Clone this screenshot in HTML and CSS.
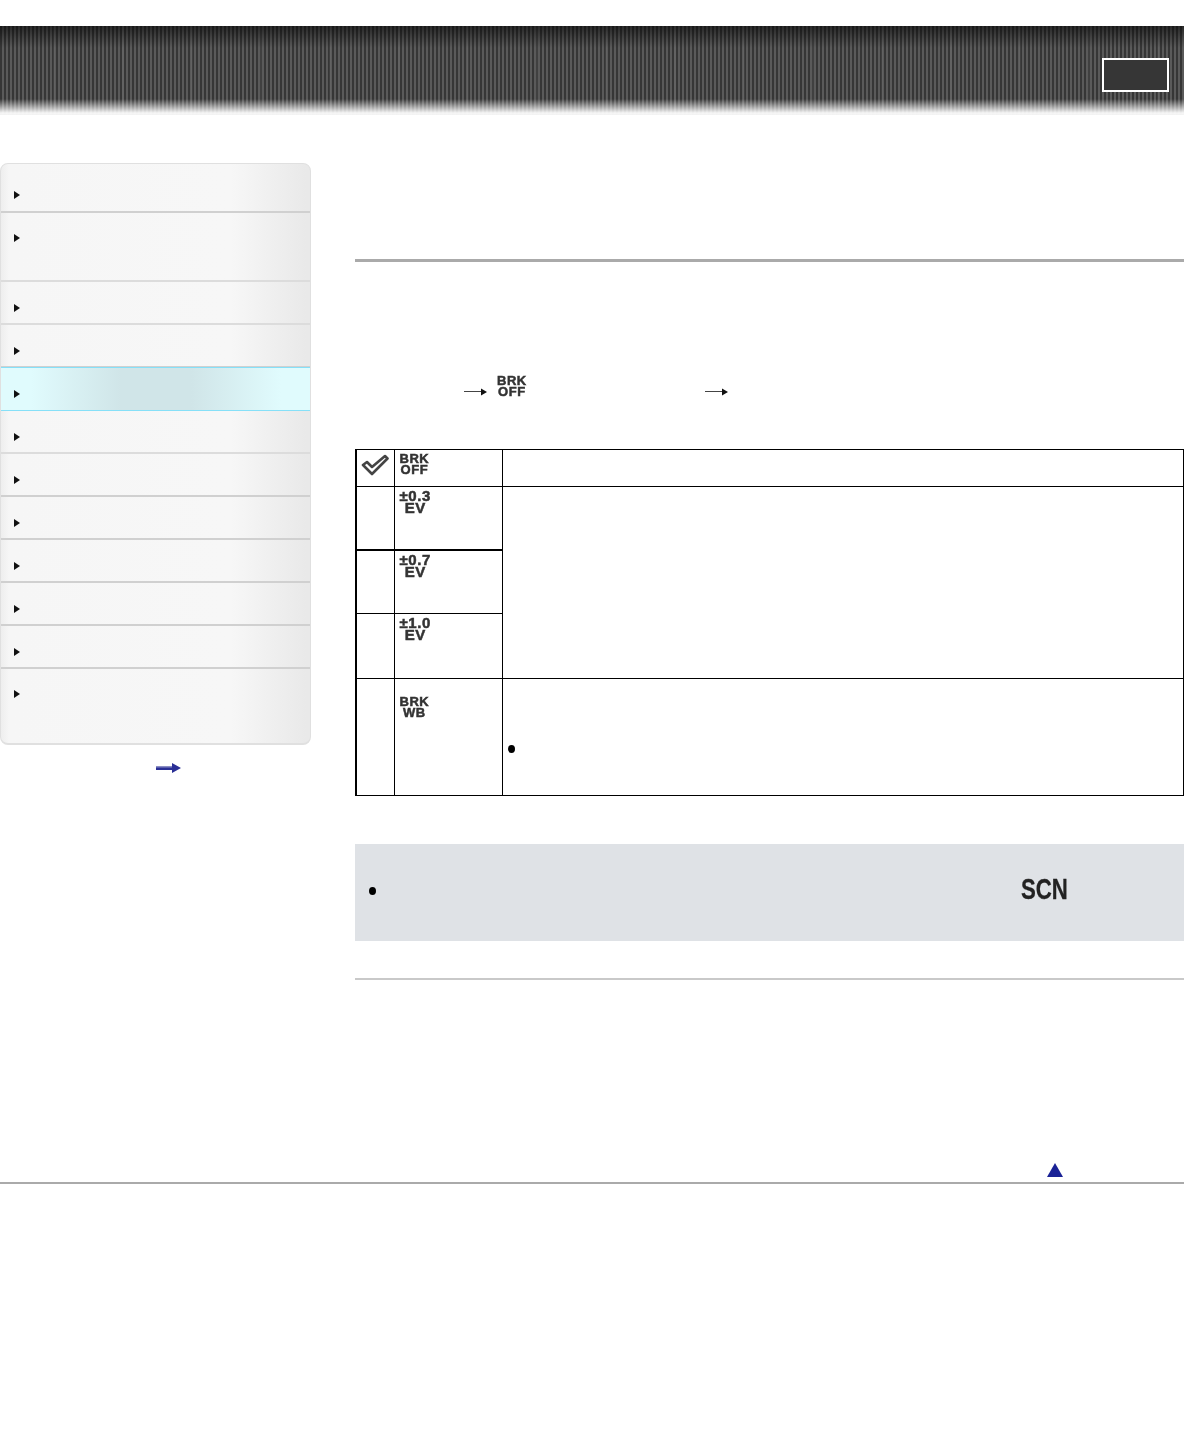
FILE: index.html
```html
<!DOCTYPE html>
<html lang="en">
<head>
  <meta charset="UTF-8" />
  <title>Bracket</title>
  <link rel="stylesheet" href="styles.css">
</head>
<body>
  <div class="header">
    <div class="header-box"></div>
  </div>

  <div class="main">
    <div class="side">
      <ul class="menu">
        <li class="r48"><i class="tri"></i></li>
        <li class="r69 thin"><i class="tri"></i></li>
        <li class="thin"><i class="tri"></i></li>
        <li><i class="tri"></i></li>
        <li class="active"><i class="tri"></i></li>
        <li class="thin"><i class="tri"></i></li>
        <li><i class="tri"></i></li>
        <li><i class="tri"></i></li>
        <li><i class="tri"></i></li>
        <li><i class="tri"></i></li>
        <li><i class="tri"></i></li>
        <li class="last"><i class="tri"></i></li>
      </ul>
      <div class="more">
        <svg width="26" height="12" viewBox="0 0 26 12"><path d="M0 4h16V1l9 5-9 5V8H0z" fill="#2a2f96"/><path d="M0 4h16v1.500H0z" fill="#8b8ec4"/></svg>
      </div>
    </div>

    <div class="content">
      <div class="title-rule"></div>
      <div class="steps">
        <svg class="arr arr1" width="24" height="10" viewBox="0 0 24 10"><path d="M0 4.500h17" stroke="#444" stroke-width="1"/><path d="M17 1.500l6 3.500-6 3.500z" fill="#111"/></svg>
        <span class="ico">BRK OFF</span>
        <svg class="arr arr2" width="24" height="10" viewBox="0 0 24 10"><path d="M0 4.500h17" stroke="#444" stroke-width="1"/><path d="M17 1.500l6 3.500-6 3.500z" fill="#111"/></svg>
      </div>

      <table class="opts">
        <tr class="h37">
          <td class="c1">
            <svg class="check" width="28" height="22" viewBox="0 0 28 22"><path d="M2 11l4-3 5 5L24 2l2.500 2.500L11 20z" fill="#fff" stroke="#444" stroke-width="2.600" stroke-linejoin="round"/></svg>
          </td>
          <td class="c2"><span class="ico">BRK OFF</span></td>
          <td></td>
        </tr>
        <tr class="h63 thick">
          <td class="c1"></td>
          <td class="c2"><span class="ico ev">±0.3 EV</span></td>
          <td rowspan="3"></td>
        </tr>
        <tr class="h64">
          <td class="c1"></td>
          <td class="c2"><span class="ico ev">±0.7 EV</span></td>
        </tr>
        <tr class="h65">
          <td class="c1"></td>
          <td class="c2"><span class="ico ev">±1.0 EV</span></td>
        </tr>
        <tr class="h117">
          <td class="c1"></td>
          <td class="c2 pad-wb"><span class="ico">BRK WB</span></td>
          <td class="pad-wb"><i class="dot"></i></td>
        </tr>
      </table>

      <div class="note">
        <i class="note-dot"></i>
        <span class="scn">SCN</span>
      </div>
      <div class="note-rule"></div>
      <div class="top-link">
        <svg width="16" height="14" viewBox="0 0 16 14"><path d="M8 0l8 14H0z" fill="#1a2296"/></svg>
      </div>
    </div>
  </div>
  <div class="foot-rule"></div>
</body>
</html>
```

FILE: styles.css
```css
* {
  box-sizing: border-box;
}
body {
  margin: 0;
  background: #fff;
  font-family: "Liberation Sans", Arial, sans-serif;
  color: #000;
}
.header {
  height: 89px;
  margin-top: 26px;
  padding: 32px 15px 0 0;
  display: flex;
  justify-content: flex-end;
  align-items: flex-start;
  background:
    linear-gradient(to bottom, rgba(255,255,255,0) 0, rgba(255,255,255,0) 73px, rgba(255,255,255,.95) 87px, #f2f2f2 89px),
    linear-gradient(to bottom, rgba(0,0,0,.55) 0, rgba(0,0,0,0) 22px),
    repeating-linear-gradient(to right, transparent 0, transparent 53px, rgba(255,255,255,.05) 53px, rgba(255,255,255,.05) 55px, transparent 55px, transparent 69px),
    repeating-linear-gradient(to right, #363636 0, #363636 2px, #5a5a5a 2px, #5a5a5a 4px);
}
.header-box {
  width: 67px;
  height: 34px;
  border: 2px solid #fff;
  background: #363636;
}
.main {
  display: flex;
  padding-top: 48px;
}
.side {
  width: 311px;
  margin-right: 44px;
  flex-shrink: 0;
}
.menu {
  list-style: none;
  margin: 0;
  padding: 0;
  border: 1px solid #e0e0e0;
  border-width: 1px 1px 2px 1px;
  border-radius: 8px;
  overflow: hidden;
  background: linear-gradient(to right, #eee 0, #f6f6f6 8px, #f7f7f7 230px, #e9e9e9 305px);
}
.menu li {
  height: 43px;
  border-bottom: 2px solid #d0d0d0;
  padding-top: 22px;
  padding-left: 13px;
}
.menu li.thin {
  border-bottom-color: #dcdcdc;
}
.menu li.r48 {
  height: 49px;
  padding-top: 27px;
}
.menu li.r69 {
  height: 69px;
  padding-top: 21px;
}
.menu li.active {
  margin: -1px 0 0 -1px;
  width: 311px;
  height: 44px;
  border: 1px solid #86e0f8;
  padding-left: 13px;
  background: linear-gradient(to right, #e0fbfd 0, #e0fbfd 30px, #d0e5e8 120px, #d0e5e8 190px, #e0fbfd 280px);
}
.menu li.last {
  height: 74px;
  border-bottom: 0;
  padding-top: 21px;
}
.tri {
  display: block;
  width: 0;
  height: 0;
  border-left: 6px solid #111;
  border-top: 4px solid transparent;
  border-bottom: 4px solid transparent;
}
.more {
  display: flex;
  justify-content: center;
  padding: 17px 0 0 26px;
}
.content {
  flex: 1;
  min-width: 0;
}
.title-rule {
  height: 3px;
  margin-top: 96px;
  background: #aaa;
}
.steps {
  position: relative;
  height: 187px;
}
.arr {
  position: absolute;
  top: 125px;
}
.arr1 {
  left: 109px;
}
.arr2 {
  left: 350px;
}
.steps .ico {
  position: absolute;
  left: 142px;
  top: 113px;
}
.ico {
  display: inline-block;
  width: min-content;
  font-size: 13px;
  font-weight: bold;
  line-height: 11px;
  text-align: center;
  color: #333;
  letter-spacing: .5px;
  -webkit-text-stroke: .5px #333;
  filter: blur(.4px);
}
.ico.ev {
  font-size: 15px;
  line-height: 12px;
  letter-spacing: .6px;
}
.opts {
  width: 829px;
  border-collapse: collapse;
  table-layout: fixed;
  border-left: 2px solid #000;
}
.opts td {
  border: 1px solid #000;
  padding: 3px 0 0 5px;
  vertical-align: top;
}
.opts td.c1 {
  width: 38px;
  padding: 0;
}
.opts td.c2 {
  width: 108px;
}
.h37 {
  height: 37px;
}
.h63 {
  height: 63px;
}
.h64 {
  height: 64px;
}
.h65 {
  height: 65px;
}
.h117 {
  height: 117px;
}
.thick .c1,
.thick .c2 {
  border-bottom: 2px solid #000;
}
.check {
  display: block;
  margin: 4px 0 0 4px;
}
.opts td.pad-wb {
  padding-top: 17px;
}
.dot {
  display: block;
  width: 7px;
  height: 8px;
  margin-top: 49px;
  border-radius: 50%;
  background: #000;
}
.note {
  position: relative;
  height: 97px;
  margin-top: 48px;
  background: #dfe2e6;
}
.note-dot {
  position: absolute;
  left: 14px;
  top: 43px;
  width: 7px;
  height: 8px;
  border-radius: 50%;
  background: #000;
}
.scn {
  position: absolute;
  left: 666px;
  top: 28px;
  font-size: 30px;
  line-height: 34px;
  font-weight: bold;
  color: #222;
  -webkit-text-stroke: .3px #222;
  transform: scaleX(.74);
  transform-origin: left center;
}
.note-rule {
  height: 2px;
  margin-top: 37px;
  background: #c9c9c9;
}
.top-link {
  height: 202px;
  padding: 183px 0 0 692px;
}
.top-link svg {
  display: block;
  filter: blur(.5px);
}
.foot-rule {
  height: 2px;
  background: #aaa;
}
```
